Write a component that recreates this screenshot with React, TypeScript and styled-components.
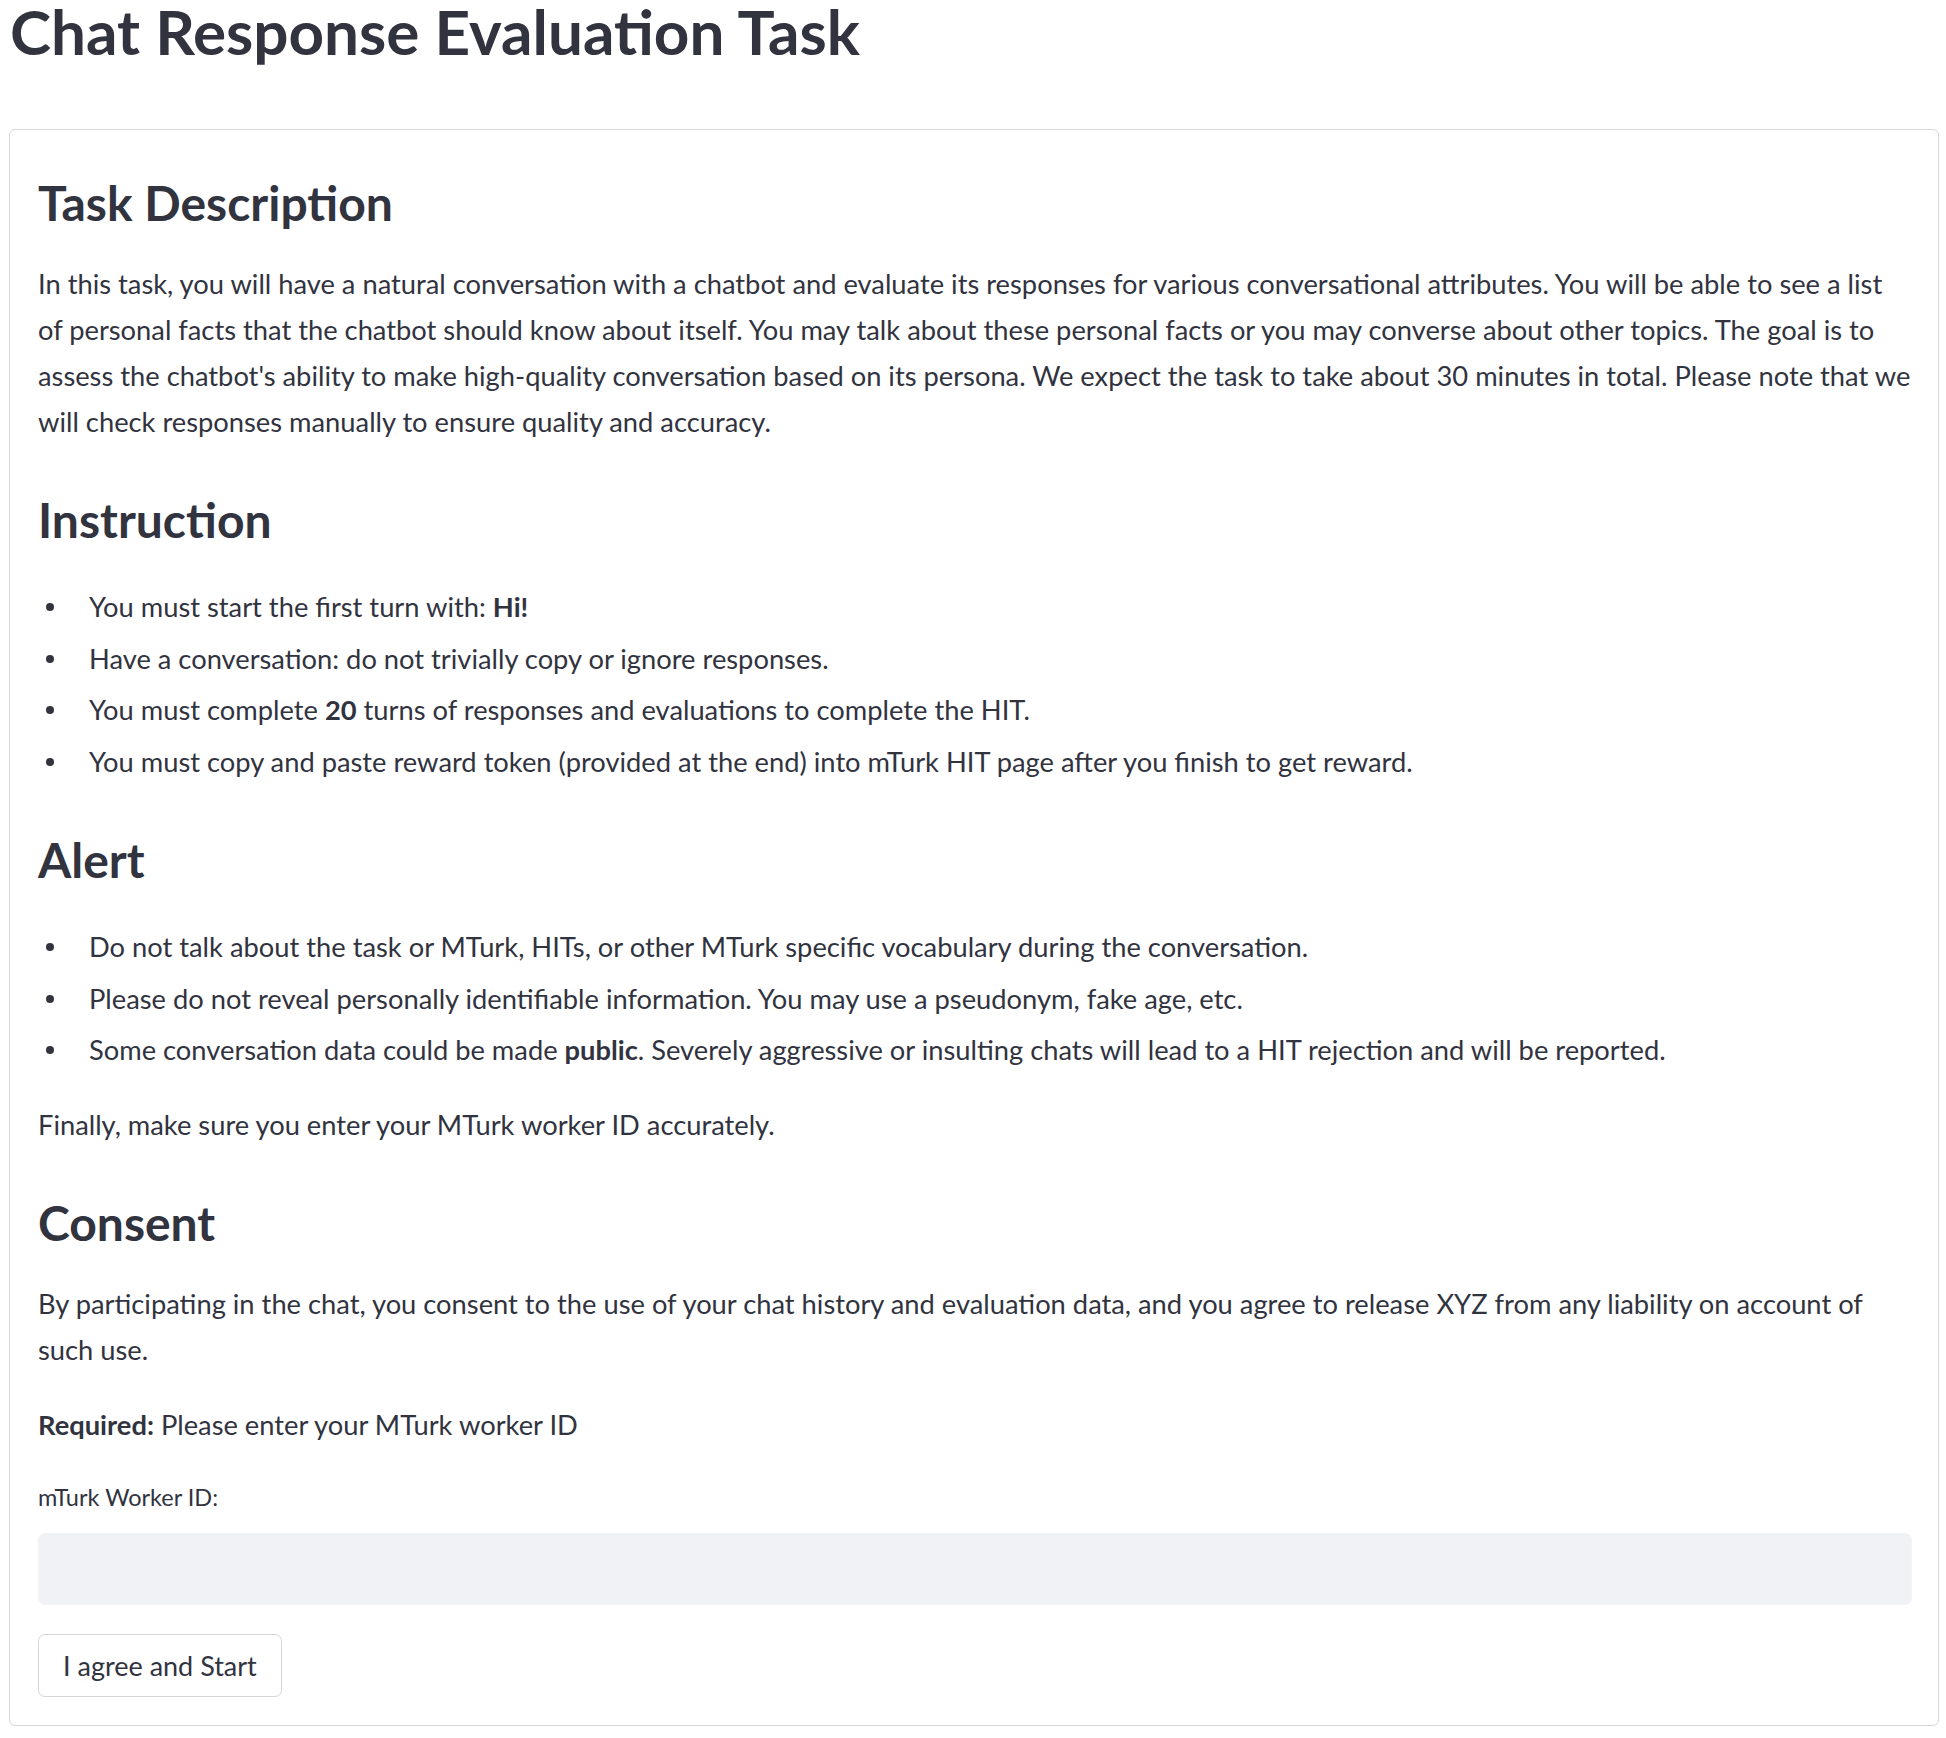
import React from "react";
import styled, { createGlobalStyle } from "styled-components";

const GlobalStyle = createGlobalStyle`
  html, body {
    margin: 0;
    padding: 0;
    background: #ffffff;
  }
  body {
    font-family: Lato, "Noto Sans", sans-serif;
    color: #31333f;
    -webkit-font-smoothing: antialiased;
  }
  * { box-sizing: border-box; }
`;

const Page = styled.main`
  padding: 0 7px 12px 9px;
`;

const Title = styled.h1`
  margin: 0 0 67px 1px;
  font-size: 62px;
  line-height: 62px;
  font-weight: 700;
`;

const Card = styled.section`
  display: flex;
  flex-direction: column;
  gap: 29px;
  border: 1px solid #d6d7da;
  border-radius: 6px;
  padding: 27px 26px 28px 28px;
`;

const Heading = styled.h3`
  margin: 0;
  padding-top: 16px;
  font-size: 48px;
  line-height: 59px;
  font-weight: 700;
`;

const Paragraph = styled.p<{ $lines?: boolean }>`
  margin: 0;
  font-size: 27.3px;
  line-height: 46px;
  white-space: ${(p) => (p.$lines ? "nowrap" : "normal")};
`;

const List = styled.ul`
  margin: 0;
  padding: 0;
  list-style: none;
`;

const Item = styled.li`
  display: flex;
  align-items: flex-start;
  margin-top: 5.76px;
  font-size: 27.3px;
  line-height: 46px;

  &::before {
    content: "";
    flex: none;
    width: 8px;
    height: 8px;
    margin: 19px 35px 0 8px;
    border-radius: 50%;
    background: currentColor;
  }
`;

const ItemText = styled.span`
  flex: 1;
`;

const Field = styled.div`
  display: flex;
  flex-direction: column;
`;

const Label = styled.label`
  font-size: 23.5px;
  line-height: 40px;
  margin-bottom: 16px;
`;

const Input = styled.input`
  height: 72px;
  width: 100%;
  border: 1px solid #f3f4f7;
  border-radius: 7px;
  background: #f0f2f6;
  outline: none;
  padding: 0 20px;
  font-family: inherit;
  font-size: 27px;
  color: #31333f;
`;

const Button = styled.button`
  align-self: flex-start;
  height: 63px;
  padding: 0 24px;
  border: 1px solid #d5d6da;
  border-radius: 7px;
  background: #ffffff;
  font-family: inherit;
  font-size: 27px;
  color: #31333f;
  cursor: pointer;
`;

export default function App() {
  return (
    <>
      <GlobalStyle />
      <Page>
        <Title>Chat Response Evaluation Task</Title>
        <Card>
          <Heading>Task Description</Heading>
          <Paragraph $lines>
            In this task, you will have a natural conversation with a chatbot and evaluate its responses for various
            conversational attributes. You will be able to see a list
            <br />
            of personal facts that the chatbot should know about itself. You may talk about these personal facts or you
            may converse about other topics. The goal is to
            <br />
            assess the chatbot's ability to make high-quality conversation based on its persona. We expect the task to
            take about 30 minutes in total. Please note that we
            <br />
            will check responses manually to ensure quality and accuracy.
          </Paragraph>

          <Heading>Instruction</Heading>
          <List>
            <Item>
              <ItemText>
                You must start the first turn with: <strong>Hi!</strong>
              </ItemText>
            </Item>
            <Item>
              <ItemText>Have a conversation: do not trivially copy or ignore responses.</ItemText>
            </Item>
            <Item>
              <ItemText>
                You must complete <strong>20</strong> turns of responses and evaluations to complete the HIT.
              </ItemText>
            </Item>
            <Item>
              <ItemText>
                You must copy and paste reward token (provided at the end) into mTurk HIT page after you finish to get
                reward.
              </ItemText>
            </Item>
          </List>

          <Heading>Alert</Heading>
          <List>
            <Item>
              <ItemText>
                Do not talk about the task or MTurk, HITs, or other MTurk specific vocabulary during the conversation.
              </ItemText>
            </Item>
            <Item>
              <ItemText>
                Please do not reveal personally identifiable information. You may use a pseudonym, fake age, etc.
              </ItemText>
            </Item>
            <Item>
              <ItemText>
                Some conversation data could be made <strong>public</strong>. Severely aggressive or insulting chats
                will lead to a HIT rejection and will be reported.
              </ItemText>
            </Item>
          </List>
          <Paragraph>Finally, make sure you enter your MTurk worker ID accurately.</Paragraph>

          <Heading>Consent</Heading>
          <Paragraph $lines>
            By participating in the chat, you consent to the use of your chat history and evaluation data, and you
            agree to release XYZ from any liability on account of
            <br />
            such use.
          </Paragraph>
          <Paragraph>
            <strong>Required:</strong> Please enter your MTurk worker ID
          </Paragraph>

          <Field>
            <Label htmlFor="worker-id">mTurk Worker ID:</Label>
            <Input id="worker-id" type="text" />
          </Field>
          <Button type="button">I agree and Start</Button>
        </Card>
      </Page>
    </>
  );
}
